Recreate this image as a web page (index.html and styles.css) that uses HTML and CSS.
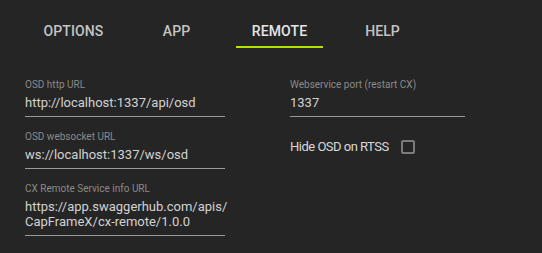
FILE: index.html
```html
<!DOCTYPE html>
<html>
<head>
<meta charset="utf-8">
<link rel="stylesheet" href="styles.css">
</head>
<body>
<div class="page">
  <nav class="tabs">
    <div class="tab">OPTIONS</div>
    <div class="tab">APP</div>
    <div class="tab active">REMOTE</div>
    <div class="tab">HELP</div>
  </nav>
  <div class="content">
    <div class="col left">
      <div class="field">
        <div class="label">OSD http URL</div>
        <div class="value">http://localhost:1337/api/osd</div>
      </div>
      <div class="field">
        <div class="label">OSD websocket URL</div>
        <div class="value">ws://localhost:1337/ws/osd</div>
      </div>
      <div class="field">
        <div class="label">CX Remote Service info URL</div>
        <div class="value">https://app.swaggerhub.com/apis/<br>CapFrameX/cx-remote/1.0.0</div>
      </div>
    </div>
    <div class="col right">
      <div class="field">
        <div class="label">Webservice port (restart CX)</div>
        <div class="value">1337</div>
      </div>
      <label class="check">
        <span>Hide OSD on RTSS</span>
        <span class="box"></span>
      </label>
    </div>
  </div>
</div>
</body>
</html>
```

FILE: styles.css
```css
html, body {
  margin: 0;
  padding: 0;
  background: #252525;
}
body {
  font-family: Roboto, "Liberation Sans", sans-serif;
  width: 542px;
  height: 253px;
  overflow: hidden;
}
.tabs {
  display: flex;
  gap: 16px;
  padding: 14px 0 0 30px;
}
.tab {
  width: 87px;
  height: 34px;
  box-sizing: border-box;
  display: flex;
  align-items: center;
  justify-content: center;
  font-size: 14px;
  font-weight: 500;
  color: #c4c4c4;
  letter-spacing: 0.1px;
}
.tab.active {
  color: #e6e6e6;
  border-bottom: 2px solid #b2e200;
  padding-top: 2px;
}
.content {
  display: flex;
  padding: 31px 0 0 25px;
}
.col.left {
  width: 200px;
  display: flex;
  flex-direction: column;
  gap: 14px;
}
.col.right {
  width: 175px;
  margin-left: 65px;
  display: flex;
  flex-direction: column;
  gap: 22px;
}
.field {
  border-bottom: 1px solid #9a9a9a;
  padding-bottom: 6px;
}
.label {
  font-size: 10px;
  line-height: 12px;
  color: #8a8a8a;
  margin-bottom: 4px;
}
.value {
  font-size: 13px;
  line-height: 15px;
  color: #d2d2d2;
}
.check {
  display: flex;
  align-items: center;
  gap: 12px;
  font-size: 13px;
  letter-spacing: -0.5px;
  color: #d8d8d8;
  line-height: 16px;
}
.box {
  width: 10px;
  height: 10px;
  border: 2px solid #7a7a7a;
  border-radius: 2px;
}
```
